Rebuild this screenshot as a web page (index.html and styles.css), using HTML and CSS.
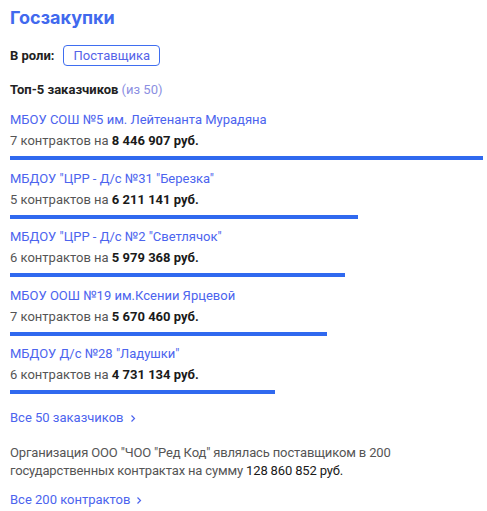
FILE: index.html
```html
<!DOCTYPE html>
<html lang="ru">
<head>
<meta charset="utf-8">
<link rel="stylesheet" href="styles.css">
</head>
<body>
<section class="card">
  <h1 class="title">Госзакупки</h1>
  <div class="role">
    <span class="role-label">В роли:</span>
    <span class="role-btn">Поставщика</span>
  </div>
  <div class="top-head">Топ-5 заказчиков <span class="muted">(из 50)</span></div>
  <ul class="list">
    <li class="item">
      <a class="link">МБОУ СОШ №5 им. Лейтенанта Мурадяна</a>
      <div class="stats">7 контрактов на <b>8 446 907 руб.</b></div>
      <div class="bar" style="width:100%"></div>
    </li>
    <li class="item">
      <a class="link">МБДОУ "ЦРР - Д/с №31 "Березка"</a>
      <div class="stats">5 контрактов на <b>6 211 141 руб.</b></div>
      <div class="bar" style="width:73.5%"></div>
    </li>
    <li class="item">
      <a class="link">МБДОУ "ЦРР - Д/с №2 "Светлячок"</a>
      <div class="stats">6 контрактов на <b>5 979 368 руб.</b></div>
      <div class="bar" style="width:70.8%"></div>
    </li>
    <li class="item">
      <a class="link">МБОУ ООШ №19 им.Ксении Ярцевой</a>
      <div class="stats">7 контрактов на <b>5 670 460 руб.</b></div>
      <div class="bar" style="width:67.1%"></div>
    </li>
    <li class="item">
      <a class="link">МБДОУ Д/с №28 "Ладушки"</a>
      <div class="stats">6 контрактов на <b>4 731 134 руб.</b></div>
      <div class="bar" style="width:56%"></div>
    </li>
  </ul>
  <a class="more">Все 50 заказчиков <svg class="chev" width="6" height="9" viewBox="0 0 6 9"><path d="M1.5 1.5 L4.5 4.5 L1.5 7.5" fill="none" stroke="currentColor" stroke-width="1.2"/></svg></a>
  <p class="summary">Организация ООО "ЧОО "Ред Код" являлась поставщиком в 200 государственных контрактах на сумму <span class="sum">128 860 852 руб.</span></p>
  <a class="more">Все 200 контрактов <svg class="chev" width="6" height="9" viewBox="0 0 6 9"><path d="M1.5 1.5 L4.5 4.5 L1.5 7.5" fill="none" stroke="currentColor" stroke-width="1.2"/></svg></a>
</section>
</body>
</html>
```
FILE: styles.css
```css
html, body {
  margin: 0;
  padding: 0;
  background: #fff;
}
body {
  font-family: Roboto, "Noto Sans", sans-serif;
  font-size: 13px;
  color: #555;
}
.card {
  padding: 6px 4px 0 10px;
  display: flex;
  flex-direction: column;
  align-items: flex-start;
}
.title {
  margin: 0;
  font-family: Inter, Roboto, sans-serif;
  font-size: 18px;
  line-height: 24px;
  font-weight: 700;
  color: #4169ee;
}
.role {
  margin-top: 15px;
  display: flex;
  align-items: center;
  gap: 9px;
}
.role-label {
  font-weight: 700;
  color: #222;
}
.role-btn {
  box-sizing: border-box;
  height: 21px;
  padding: 0 9px;
  border: 1px solid #3f6ef0;
  border-radius: 4px;
  color: #5563e8;
  line-height: 19px;
}
.top-head {
  margin-top: 14px;
  line-height: 20px;
  font-weight: 700;
  color: #222;
}
.muted {
  font-weight: 400;
  color: #8c8fe2;
}
.list {
  list-style: none;
  margin: 10px 0 0;
  padding: 0;
  align-self: stretch;
  display: flex;
  flex-direction: column;
  gap: 8.5px;
}
.item {
  display: flex;
  flex-direction: column;
}
.link {
  line-height: 20px;
  color: #4c64ee;
}
.stats {
  margin-top: 1px;
  line-height: 20px;
  color: #555;
}
.stats b {
  color: #1a1a1a;
  font-weight: 700;
}
.bar {
  margin-top: 5px;
  height: 4px;
  background: #3069ef;
}
.more {
  margin-top: 14px;
  line-height: 20px;
  color: #4c64ee;
  display: inline-flex;
  align-items: center;
  gap: 6px;
}
.summary {
  margin: 16px 0 0;
  line-height: 18px;
  letter-spacing: -0.15px;
  color: #555;
}
.sum {
  color: #1a1a1a;
}
.summary + .more {
  margin-top: 10px;
}
```
